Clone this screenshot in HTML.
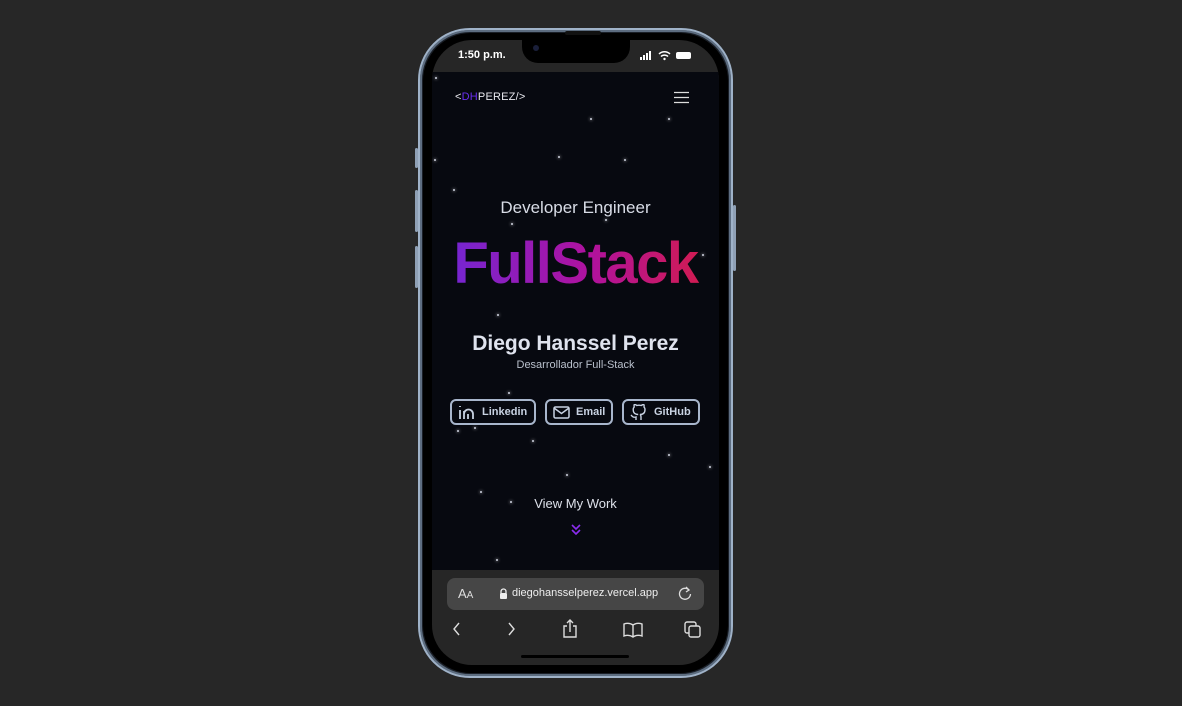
<!DOCTYPE html>
<html><head><style>
*{margin:0;padding:0;box-sizing:border-box}
body{width:1182px;height:706px;background:#272727;position:relative;overflow:hidden;font-family:"Liberation Sans",sans-serif}
.frame{position:absolute;left:418px;top:28px;width:315px;height:650px;border-radius:52px;background:#1a1f27;border:2px solid #9fb2c8;box-shadow:inset 0 0 0 2px #5d6d80}
.bezel{position:absolute;left:423px;top:33px;width:305px;height:640px;border-radius:48px;background:#000}
.screen{position:absolute;left:432px;top:40px;width:287px;height:625px;border-radius:40px;background:#262626;overflow:hidden}
.notch{position:absolute;left:522px;top:40px;width:108px;height:23px;background:#000;border-radius:0 0 16px 16px}
.content{position:absolute;left:0;top:32px;width:287px;height:498px;background:#070910}
.star{position:absolute;width:2px;height:2px;border-radius:50%;background:#cfd4e0;box-shadow:0 0 3px #fff}
.btn{position:absolute;top:327px;height:26px;border:2px solid #a8b6cc;border-radius:6px;color:#c8d2e2;font-weight:bold;font-size:11px;display:flex;align-items:center;gap:6px;padding-left:6px}
.sidebtn{position:absolute;width:3px;background:#8fa0b5;border-radius:2px}
</style></head><body>
<div class="sidebtn" style="left:415px;top:148px;height:20px"></div>
<div class="sidebtn" style="left:415px;top:190px;height:42px"></div>
<div class="sidebtn" style="left:415px;top:246px;height:42px"></div>
<div class="sidebtn" style="left:733px;top:205px;height:66px"></div>
<div class="frame"></div>
<div class="bezel"></div>
<div class="screen">
 <div style="position:absolute;left:26px;top:9px;color:#fff;font-weight:bold;font-size:11px">1:50 p.m.</div>
 <svg style="position:absolute;left:208px;top:11px" width="60" height="10"><rect x="0" y="6" width="2" height="3" fill="#fff"/><rect x="3" y="4" width="2" height="5" fill="#fff"/><rect x="6" y="2" width="2" height="7" fill="#fff"/><rect x="9" y="0" width="2" height="9" fill="#fff"/><path d="M19 3a8 8 0 0 1 11 0M21 5.5a5 5 0 0 1 7 0" stroke="#fff" stroke-width="1.5" fill="none"/><circle cx="24.5" cy="8" r="1.2" fill="#fff"/><rect x="36" y="1" width="15" height="7" rx="2" fill="#fff"/></svg>
 <div class="content">
  <div style="position:absolute;left:23px;top:19px;font-size:11px;color:#e8e8ee;letter-spacing:0.2px">&lt;<span style="color:#6a2ff0">DH</span>PEREZ/&gt;</div>
  <svg style="position:absolute;left:242px;top:19px" width="15" height="13"><path d="M0 1.5H15M0 6.5H15M0 11.5H15" stroke="#ddd" stroke-width="1.3"/></svg>
  <div style="position:absolute;left:0;width:287px;top:126px;text-align:center;color:#d8dce6;font-size:17px">Developer Engineer</div>
  <div style="position:absolute;left:0;width:287px;top:157px;text-align:center;font-size:58px;font-weight:bold;letter-spacing:-1.5px;line-height:70px;background:linear-gradient(90deg,#6d28d9,#b0129e 55%,#d61d45);-webkit-background-clip:text;color:transparent">FullStack</div>
  <div style="position:absolute;left:0;width:287px;top:260px;text-align:center;color:#dfe3ee;font-size:21px;font-weight:bold">Diego Hanssel Perez</div>
  <div style="position:absolute;left:0;width:287px;top:287px;text-align:center;color:#b9c0cc;font-size:11px">Desarrollador Full-Stack</div>
  <div class="btn" style="left:18px;width:86px"><svg width="18" height="16"><path d="M2 6v9M2 2v1M6 15V7M6 10a4 4 0 0 1 9 0v5M10 15v-5" stroke="#c8d2e2" stroke-width="1.8" fill="none"/></svg>Linkedin</div>
  <div class="btn" style="left:113px;width:68px"><svg width="17" height="13"><rect x="1" y="1" width="15" height="11" rx="1.5" stroke="#c8d2e2" stroke-width="1.5" fill="none"/><path d="M1 2l7.5 5.5L16 2" stroke="#c8d2e2" stroke-width="1.5" fill="none"/></svg>Email</div>
  <div class="btn" style="left:190px;width:78px"><svg width="18" height="17"><path d="M6 16v-3c-3 1-4-1-5-2M11 16v-3c0-1 0-2-1-2.5 3 0 5-1.5 5-5 0-1-.5-2-1-2.5.2-1 .2-2-.2-2.5-1 0-2 .5-2.5 1a8 8 0 0 0-4.6 0C6.3 1 5.3.5 4.3.5 4 1 4 2 4.2 3c-.5.5-1 1.5-1 2.5 0 3.5 2 5 5 5" stroke="#c8d2e2" stroke-width="1.4" fill="none"/></svg>GitHub</div>
  <div style="position:absolute;left:0;width:287px;top:424px;text-align:center;color:#dde1ea;font-size:13px">View My Work</div>
  <svg style="position:absolute;left:139px;top:452px" width="10" height="11"><path d="M1 1l4 4 4-4M1 6l4 4 4-4" stroke="#8b2cf0" stroke-width="1.6" fill="none"/></svg>
  <div class="star" style="left:3px;top:5px"></div><div class="star" style="left:158px;top:46px"></div><div class="star" style="left:236px;top:46px"></div>
  <div class="star" style="left:2px;top:87px"></div><div class="star" style="left:126px;top:84px"></div><div class="star" style="left:192px;top:87px"></div>
  <div class="star" style="left:21px;top:117px"></div><div class="star" style="left:79px;top:151px"></div><div class="star" style="left:173px;top:147px"></div>
  <div class="star" style="left:270px;top:182px"></div><div class="star" style="left:65px;top:242px"></div><div class="star" style="left:76px;top:320px"></div>
  <div class="star" style="left:25px;top:358px"></div><div class="star" style="left:42px;top:355px"></div><div class="star" style="left:100px;top:368px"></div>
  <div class="star" style="left:134px;top:402px"></div><div class="star" style="left:236px;top:382px"></div><div class="star" style="left:277px;top:394px"></div>
  <div class="star" style="left:78px;top:429px"></div><div class="star" style="left:64px;top:487px"></div><div class="star" style="left:48px;top:419px"></div>
 </div>
 <div style="position:absolute;left:15px;top:538px;width:257px;height:32px;border-radius:8px;background:#464646"></div>
 <div style="position:absolute;left:26px;top:546px;color:#ddd;font-size:13px">A<span style="font-size:10px">A</span></div>
 <svg style="position:absolute;left:67px;top:548px" width="9" height="11"><path d="M2 5V3.5a2.5 2.5 0 0 1 5 0V5" stroke="#eee" stroke-width="1.3" fill="none"/><rect x="1" y="5" width="7" height="6" rx="1" fill="#eee"/></svg>
 <div style="position:absolute;left:80px;top:547px;color:#eee;font-size:11px">diegohansselperez.vercel.app</div>
 <svg style="position:absolute;left:246px;top:546px" width="14" height="14"><path d="M11 4A5.5 5.5 0 1 0 12.5 8" stroke="#ddd" stroke-width="1.3" fill="none"/><path d="M8 1l3 3-3 2" stroke="#ddd" stroke-width="1.3" fill="none"/></svg>
 <svg style="position:absolute;left:0;top:578px" width="287" height="22" fill="none" stroke="#ddd" stroke-width="1.4">
  <path d="M27 5l-5 6 5 6M77 5l5 6-5 6"/>
  <path d="M135 8h-3v11h12V8h-3M138 14V2M135 5l3-3 3 3"/>
  <path d="M192 6v12c3-1 6-1 9 1 3-2 6-2 9-1V6c-3-1-6-1-9 1-3-2-6-2-9-1zM201 7v12"/>
  <rect x="253" y="4" width="11" height="11" rx="2"/><rect x="257" y="8" width="11" height="11" rx="2" fill="#262626"/>
 </svg>
 <div style="position:absolute;left:89px;top:615px;width:108px;height:3px;border-radius:2px;background:#000"></div>
</div>
<div class="notch"></div>
<div style="position:absolute;left:565px;top:31px;width:36px;height:4px;background:#111;border-radius:2px"></div>
<div style="position:absolute;left:533px;top:45px;width:6px;height:6px;border-radius:50%;background:#1a1f3a"></div>
</body></html>
